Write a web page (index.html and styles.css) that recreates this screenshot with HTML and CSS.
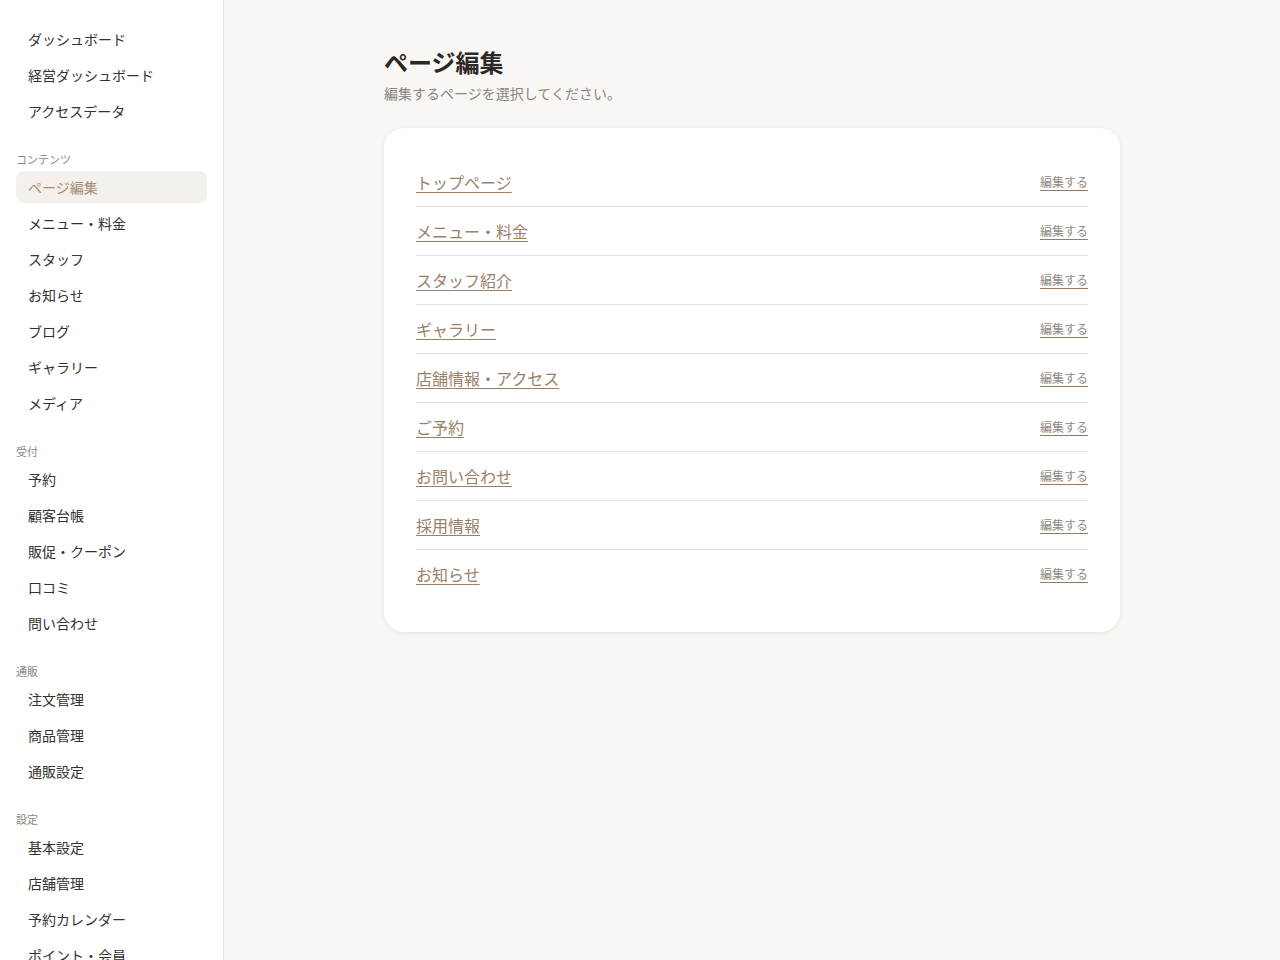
FILE: index.html
```html
<!DOCTYPE html>
<html lang="ja">
<head>
<meta charset="utf-8">
<title>ページ編集</title>
<link rel="stylesheet" href="styles.css">
</head>
<body>
<div class="layout">
    <aside class="sidebar">
        <nav class="nav-group">
            <a class="nav-item" href="#">ダッシュボード</a>
            <a class="nav-item" href="#">経営ダッシュボード</a>
            <a class="nav-item" href="#">アクセスデータ</a>
        </nav>
        <div class="nav-label">コンテンツ</div>
        <nav class="nav-group">
            <a class="nav-item active" href="#">ページ編集</a>
            <a class="nav-item" href="#">メニュー・料金</a>
            <a class="nav-item" href="#">スタッフ</a>
            <a class="nav-item" href="#">お知らせ</a>
            <a class="nav-item" href="#">ブログ</a>
            <a class="nav-item" href="#">ギャラリー</a>
            <a class="nav-item" href="#">メディア</a>
        </nav>
        <div class="nav-label">受付</div>
        <nav class="nav-group">
            <a class="nav-item" href="#">予約</a>
            <a class="nav-item" href="#">顧客台帳</a>
            <a class="nav-item" href="#">販促・クーポン</a>
            <a class="nav-item" href="#">口コミ</a>
            <a class="nav-item" href="#">問い合わせ</a>
        </nav>
        <div class="nav-label">通販</div>
        <nav class="nav-group">
            <a class="nav-item" href="#">注文管理</a>
            <a class="nav-item" href="#">商品管理</a>
            <a class="nav-item" href="#">通販設定</a>
        </nav>
        <div class="nav-label">設定</div>
        <nav class="nav-group">
            <a class="nav-item" href="#">基本設定</a>
            <a class="nav-item" href="#">店舗管理</a>
            <a class="nav-item" href="#">予約カレンダー</a>
            <a class="nav-item" href="#">ポイント・会員</a>
        </nav>
    </aside>

    <main class="main">
        <div class="content">
            <h1 class="page-title">ページ編集</h1>
            <p class="page-desc">編集するページを選択してください。</p>

            <div class="card">
                <ul class="page-list">
                    <li class="page-row"><a class="page-link" href="#">トップページ</a><a class="edit-link" href="#">編集する</a></li>
                    <li class="page-row"><a class="page-link" href="#">メニュー・料金</a><a class="edit-link" href="#">編集する</a></li>
                    <li class="page-row"><a class="page-link" href="#">スタッフ紹介</a><a class="edit-link" href="#">編集する</a></li>
                    <li class="page-row"><a class="page-link" href="#">ギャラリー</a><a class="edit-link" href="#">編集する</a></li>
                    <li class="page-row"><a class="page-link" href="#">店舗情報・アクセス</a><a class="edit-link" href="#">編集する</a></li>
                    <li class="page-row"><a class="page-link" href="#">ご予約</a><a class="edit-link" href="#">編集する</a></li>
                    <li class="page-row"><a class="page-link" href="#">お問い合わせ</a><a class="edit-link" href="#">編集する</a></li>
                    <li class="page-row"><a class="page-link" href="#">採用情報</a><a class="edit-link" href="#">編集する</a></li>
                    <li class="page-row"><a class="page-link" href="#">お知らせ</a><a class="edit-link" href="#">編集する</a></li>
                </ul>
            </div>
        </div>
    </main>
</div>
</body>
</html>
```

FILE: styles.css
```css
html, body {
    margin: 0;
    height: 100%;
}

body {
    font-family: "Noto Sans CJK JP", "Noto Sans", sans-serif;
    background-color: #f8f7f4;
    color: #33302c;
    overflow: hidden;
}

.layout {
    display: flex;
    height: 960px;
}

.sidebar {
    flex: 0 0 224px;
    box-sizing: border-box;
    background-color: #ffffff;
    border-right: 1px solid #ebe8e3;
    padding: 23px 16px 0 16px;
    overflow: hidden;
}

.nav-group {
    display: flex;
    flex-direction: column;
    gap: 4px;
}

.nav-item {
    display: block;
    padding: 6px 12px;
    font-size: 14px;
    line-height: 20px;
    color: #35312d;
    text-decoration: none;
    border-radius: 8px;
}

.nav-item.active {
    background-color: #f4f0eb;
    color: #a48c73;
}

.nav-label {
    margin: 24px 0 4px 0;
    font-size: 11px;
    line-height: 16px;
    color: #8d8882;
}

.main {
    flex: 1;
    padding: 46px 0 0 0;
}

.content {
    width: 736px;
    margin: 0 auto;
}

.page-title {
    margin: 0;
    font-size: 24px;
    line-height: 32px;
    font-weight: 700;
    color: #2b2825;
}

.page-desc {
    margin: 5px 0 0 0;
    font-size: 14px;
    line-height: 20px;
    color: #8a857f;
}

.card {
    margin-top: 25px;
    background-color: #ffffff;
    border-radius: 20px;
    box-shadow: 0 1px 4px rgba(60, 50, 40, 0.10);
    padding: 30px 32px 34px 32px;
}

.page-list {
    list-style: none;
    margin: 0;
    padding: 0;
}

.page-row {
    display: flex;
    justify-content: space-between;
    align-items: center;
    padding: 12px 0;
    border-bottom: 1px solid #e6e3df;
}

.page-row:last-child {
    border-bottom: none;
}

.page-link {
    font-size: 16px;
    line-height: 24px;
    color: #9a8068;
    text-decoration: underline;
    text-underline-offset: 3px;
}

.edit-link {
    font-size: 12px;
    line-height: 18px;
    color: #8f8a85;
    text-decoration: underline;
    text-decoration-color: #9a7a5c;
    text-underline-offset: 3px;
}
```
